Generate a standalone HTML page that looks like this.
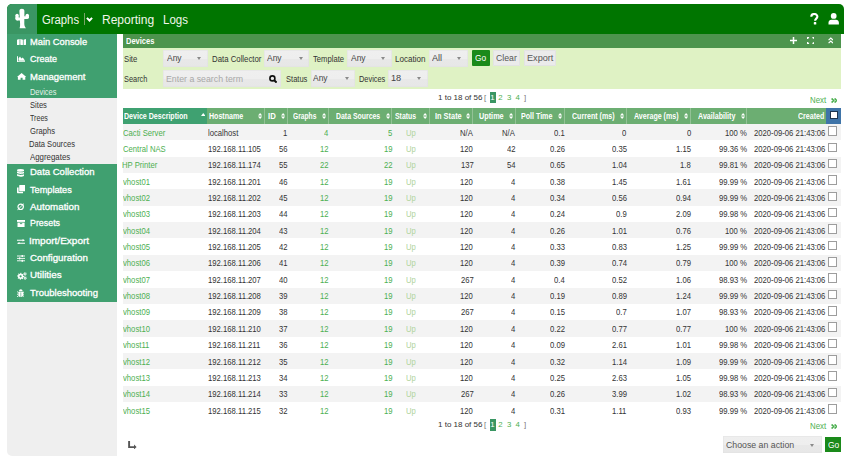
<!DOCTYPE html>
<html><head><meta charset="utf-8">
<style>
*{margin:0;padding:0;box-sizing:border-box}
html,body{width:848px;height:465px;overflow:hidden;background:#fff;font-family:"Liberation Sans",sans-serif;color:#333;position:relative}
.a{position:absolute}
.t{position:absolute;line-height:20px;white-space:nowrap;transform-origin:0 0}
.sel{background:linear-gradient(#efefef 0,#eeeeee 50%,#e8e8e8 56%,#e7e7e7 100%);border-radius:0.5px;box-shadow:inset 0 0 0 0.6px #e2e2e2}
.tri{width:0;height:0;border-left:2.2px solid transparent;border-right:2.2px solid transparent;border-top:3px solid #8a8a8a}
</style></head><body>
<!-- header -->
<div class="a" style="left:7px;top:4px;width:837px;height:30px;background:#007500;border-radius:5px 5px 0 0;overflow:hidden">
  <div class="a" style="left:0;top:0;width:30px;height:30px;background:#3a9663"></div>
  <svg class="a" style="left:0;top:0" width="30" height="30" viewBox="0 0 30 30"><g fill="#fff">
    <path d="M12.4 7C12.4 5.6 13.5 4.8 14.9 4.8 16.4 4.8 17.4 5.6 17.4 7L17.3 20C17.4 22 18.2 23.4 19 24.2L12.6 24.2C13 23 13.2 21.5 13.1 20Z"/>
    <rect x="8.4" y="9.7" width="3.3" height="6.8" rx="1.65"/>
    <path d="M8.6 13.5H13.3V16.6H11.3C9.8 16.6 8.6 15.6 8.6 14.2Z"/>
    <rect x="18.6" y="9.7" width="3.3" height="5.1" rx="1.65"/>
    <path d="M17 12.2H21.8V12.8C21.8 14.2 20.8 15 19.4 15H17Z"/>
  </g></svg>
  <div class="a" style="left:77.2px;top:9px;width:0.8px;height:11.6px;background:#78a466"></div>
  <svg class="a" style="left:79.4px;top:12.8px" width="7" height="4.8" viewBox="0 0 7 4.8"><path d="M0.9 0.9L3.5 3.5 6.1 0.9" stroke="#fff" stroke-width="2" fill="none"/></svg>
  <!-- ? -->
  <svg class="a" style="left:803.2px;top:9.4px" width="8.6" height="11.6" viewBox="0 0 8.6 11.6"><path d="M1.3 3.7C1.3 1.9 2.6 1 4.3 1 6 1 7.4 2 7.4 3.6 7.4 5.6 5.1 5.7 5.1 7.7" stroke="#fff" stroke-width="2.1" fill="none"/><rect x="3.8" y="9.1" width="2.5" height="2.5" rx="0.6" fill="#fff"/></svg>
  <!-- user -->
  <svg class="a" style="left:821.4px;top:9.4px" width="11.2" height="11.6" viewBox="0 0 11.2 11.6"><circle cx="5.7" cy="2.9" r="2.9" fill="#fff"/><path d="M0.5 11.6V9.8C0.5 7.9 1.8 6.8 3.5 6.8H8C9.6 6.8 10.9 7.9 10.9 9.8V11.6Z" fill="#fff"/></svg>
</div>
<!-- sidebar -->
<div class="a" style="left:7px;top:34px;width:109.6px;height:422px;background:#efefef;border-radius:0 0 0 5px"></div>
<div class="a" style="left:7px;top:34px;width:109.6px;height:63.5px;background:#40a070"></div>
<div class="a" style="left:7px;top:163.8px;width:109.6px;height:138.2px;background:#40a070"></div>
<!-- sidebar icons -->
<svg class="a" style="left:16.8px;top:38.8px" width="9.2" height="6.5" viewBox="0 0 9.2 6.5"><path d="M0 0.8L2.6 0 2.6 5.7 0 6.5ZM3.3 0L5.9 0.8 5.9 6.5 3.3 5.7ZM6.6 0.8L9.2 0 9.2 5.7 6.6 6.5Z" fill="#fff"/></svg>
<svg class="a" style="left:16.8px;top:56px" width="8.4" height="6.2" viewBox="0 0 8.4 6.2"><path d="M0 0.2H1V5.2H8.4V6.2H0ZM1.6 4.8V2.2L3 0.6 4.4 2.6 5.8 1.4 8.2 4.8Z" fill="#fff"/></svg>
<svg class="a" style="left:16.8px;top:73.2px" width="9.2" height="6.8" viewBox="0 0 9.2 6.8"><path d="M4.6 0L9.2 3.9 8.3 3.9 8.3 6.8 5.6 6.8 5.6 4.7 3.6 4.7 3.6 6.8 0.9 6.8 0.9 3.9 0 3.9Z" fill="#fff"/></svg>
<svg class="a" style="left:16.8px;top:168.9px" width="7.2" height="7.9" viewBox="0 0 7.2 7.9"><ellipse cx="3.6" cy="1.4" rx="3.6" ry="1.4" fill="#fff"/><path d="M0 2.5C0.8 3.6 6.4 3.6 7.2 2.5V4.1C6.4 5.2 0.8 5.2 0 4.1ZM0 5.1C0.8 6.2 6.4 6.2 7.2 5.1V6.6C6.4 8.2 0.8 8.2 0 6.6Z" fill="#fff"/></svg>
<svg class="a" style="left:16.7px;top:185.4px" width="8.5" height="8.3" viewBox="0 0 8.5 8.3"><rect x="2.2" y="0" width="6.3" height="6.3" rx="0.7" fill="#fff"/><path d="M0 2.4H1.6V6.8H6V8.3H0.7C0.3 8.3 0 8 0 7.6Z" fill="#fff"/></svg>
<svg class="a" style="left:16.7px;top:203.3px" width="7.4" height="7.5" viewBox="0 0 7.4 7.5"><circle cx="3.7" cy="3.8" r="2.7" stroke="#fff" stroke-width="1.2" fill="none"/><path d="M0.4 7.2L7 0.4" stroke="#fff" stroke-width="0.9"/></svg>
<svg class="a" style="left:16.7px;top:220.2px" width="8.1" height="7.1" viewBox="0 0 8.1 7.1"><rect x="0" y="0" width="8.1" height="1.9" fill="#fff"/><path d="M0.5 2.6H7.6V7.1H0.5Z" fill="#fff"/><rect x="2.9" y="3.2" width="2.3" height="0.9" fill="#40a070"/></svg>
<svg class="a" style="left:16.7px;top:238.8px" width="8.1" height="5.6" viewBox="0 0 8.1 5.6"><path d="M0 1.3H6.2M8.1 4.3H1.9" stroke="#fff" stroke-width="1.1" fill="none"/><path d="M5.6 0L8.1 1.3 5.6 2.6ZM2.5 3L0 4.3 2.5 5.6Z" fill="#fff"/></svg>
<svg class="a" style="left:16.7px;top:255.3px" width="8.1" height="6.8" viewBox="0 0 8.1 6.8"><path d="M0 1H8.1M0 3.4H8.1M0 5.8H8.1" stroke="#fff" stroke-width="0.9"/><rect x="4.6" y="0" width="1.3" height="2" fill="#fff"/><rect x="2" y="2.4" width="1.3" height="2" fill="#fff"/><rect x="4.6" y="4.8" width="1.3" height="2" fill="#fff"/></svg>
<svg class="a" style="left:16.9px;top:272.1px" width="9.9" height="8" viewBox="0 0 9.9 8"><path fill-rule="evenodd" d="M7.10 4.30 L7.03 4.98 L6.00 5.29 L5.76 5.74 L6.07 6.77 L5.54 7.21 L4.59 6.70 L4.11 6.85 L3.60 7.80 L2.92 7.73 L2.61 6.70 L2.16 6.46 L1.13 6.77 L0.69 6.24 L1.20 5.29 L1.05 4.81 L0.10 4.30 L0.17 3.62 L1.20 3.31 L1.44 2.86 L1.13 1.83 L1.66 1.39 L2.61 1.90 L3.09 1.75 L3.60 0.80 L4.28 0.87 L4.59 1.90 L5.04 2.14 L6.07 1.83 L6.51 2.36 L6.00 3.31 L6.15 3.79Z M4.70 4.30 A1.1 1.1 0 1 0 2.50 4.30 A1.1 1.1 0 1 0 4.70 4.30Z M9.85 1.90 L9.79 2.35 L9.18 2.52 L8.98 2.78 L8.97 3.42 L8.55 3.59 L8.10 3.15 L7.78 3.11 L7.22 3.42 L6.86 3.14 L7.02 2.52 L6.89 2.22 L6.35 1.90 L6.41 1.45 L7.02 1.28 L7.22 1.02 L7.22 0.38 L7.65 0.21 L8.10 0.65 L8.42 0.69 L8.97 0.38 L9.34 0.66 L9.18 1.27 L9.31 1.58Z M8.65 1.90 A0.55 0.55 0 1 0 7.55 1.90 A0.55 0.55 0 1 0 8.65 1.90Z M9.85 6.10 L9.79 6.55 L9.18 6.72 L8.98 6.98 L8.97 7.62 L8.55 7.79 L8.10 7.35 L7.78 7.31 L7.22 7.62 L6.86 7.34 L7.02 6.72 L6.89 6.42 L6.35 6.10 L6.41 5.65 L7.02 5.47 L7.22 5.22 L7.22 4.58 L7.65 4.41 L8.10 4.85 L8.42 4.89 L8.97 4.58 L9.34 4.86 L9.18 5.47 L9.31 5.78Z M8.65 6.10 A0.55 0.55 0 1 0 7.55 6.10 A0.55 0.55 0 1 0 8.65 6.10Z" fill="#fff"/></svg>
<svg class="a" style="left:16.9px;top:289px" width="7.6" height="8.3" viewBox="0 0 7.6 8.3"><path d="M2 2.2C2 0.9 2.8 0.2 3.8 0.2 4.8 0.2 5.6 0.9 5.6 2.2Z" fill="#fff"/><path d="M1.5 2.8H6.1V6C6.1 7.4 5.1 8.1 3.8 8.1 2.5 8.1 1.5 7.4 1.5 6Z" fill="#fff"/><path d="M0.1 2.6L1.6 3.6M7.5 2.6L6 3.6M0 5.2H1.6M7.6 5.2H6M0.1 7.8L1.7 6.7M7.5 7.8L5.9 6.7" stroke="#fff" stroke-width="0.9"/><path d="M3.8 3.4V8" stroke="#40a070" stroke-width="0.6"/></svg>
<!-- devices heading -->
<div class="a" style="left:123px;top:34px;width:718px;height:14.2px;background:#4d944d"></div>
<svg class="a" style="left:790px;top:36.9px" width="7" height="7" viewBox="0 0 7 7"><path d="M3.5 0V7M0 3.5H7" stroke="#fff" stroke-width="1.5"/></svg>
<svg class="a" style="left:806.7px;top:37.1px" width="7.5" height="7" viewBox="0 0 7.5 7"><path d="M0.6 2.1V0.6H2.1M5.4 0.6H6.9V2.1M6.9 4.9V6.4H5.4M2.1 6.4H0.6V4.9" stroke="#fff" stroke-width="1.2" fill="none"/></svg>
<svg class="a" style="left:827.6px;top:37.4px" width="5.6" height="7" viewBox="0 0 5.6 7"><path d="M0.6 3.2L2.8 1 5 3.2M0.6 6.2L2.8 4 5 6.2" stroke="#fff" stroke-width="1.2" fill="none"/></svg>
<!-- filter -->
<div class="a" style="left:123px;top:48.2px;width:718px;height:40.6px;background:#dff2c4"></div>
<!-- bottom -->
<svg class="a" style="left:127.8px;top:440.6px" width="9" height="8.4" viewBox="0 0 9 8.4"><path d="M1.1 0V6.1H6.4" stroke="#555" stroke-width="1.9" fill="none"/><path d="M6 3.6L8.6 6.1 6 8.4Z" fill="#555"/></svg>
<div class="a sel" style="left:723px;top:436.2px;width:98.9px;height:17.2px"></div>
<div class="a tri" style="left:810.3px;top:443.8px"></div>
<div class="a" style="left:824.9px;top:437px;width:16.3px;height:15.4px;background:#1a8a1a"></div>
<div class="t" style="left:42.24px;top:10px;font-size:12.3px;color:#f2f6ec;transform:scaleX(0.919)">Graphs</div>
<div class="t" style="left:101.51px;top:10px;font-size:12.3px;color:#f2f6ec;transform:scaleX(0.978)">Reporting</div>
<div class="t" style="left:163.25px;top:10px;font-size:12.3px;color:#f2f6ec;transform:scaleX(0.936)">Logs</div>
<div class="t" style="left:29.83px;top:32px;font-size:9.6px;color:#fff;-webkit-text-stroke:0.3px #fff;transform:scaleX(0.973)">Main Console</div>
<div class="t" style="left:30.15px;top:49px;font-size:9.6px;color:#fff;-webkit-text-stroke:0.3px #fff;transform:scaleX(0.935)">Create</div>
<div class="t" style="left:29.82px;top:67px;font-size:9.6px;color:#fff;-webkit-text-stroke:0.3px #fff;transform:scaleX(0.990)">Management</div>
<div class="t" style="left:29.59px;top:82px;font-size:8.6px;color:#e4f1e8;transform:scaleX(0.865)">Devices</div>
<div class="t" style="left:29.56px;top:95px;font-size:8.6px;color:#333;transform:scaleX(0.885)">Sites</div>
<div class="t" style="left:29.74px;top:108px;font-size:8.6px;color:#333;transform:scaleX(0.826)">Trees</div>
<div class="t" style="left:29.52px;top:121px;font-size:8.6px;color:#333;transform:scaleX(0.888)">Graphs</div>
<div class="t" style="left:29.27px;top:134px;font-size:8.6px;color:#333;transform:scaleX(0.882)">Data Sources</div>
<div class="t" style="left:29.88px;top:147px;font-size:8.6px;color:#333;transform:scaleX(0.914)">Aggregates</div>
<div class="t" style="left:29.62px;top:162px;font-size:9.6px;color:#fff;-webkit-text-stroke:0.3px #fff;transform:scaleX(0.991)">Data Collection</div>
<div class="t" style="left:30.19px;top:180px;font-size:9.6px;color:#fff;-webkit-text-stroke:0.3px #fff;transform:scaleX(0.956)">Templates</div>
<div class="t" style="left:30.38px;top:197px;font-size:9.6px;color:#fff;-webkit-text-stroke:0.3px #fff;transform:scaleX(1.018)">Automation</div>
<div class="t" style="left:29.67px;top:213px;font-size:9.6px;color:#fff;-webkit-text-stroke:0.3px #fff;transform:scaleX(0.923)">Presets</div>
<div class="t" style="left:29.47px;top:231px;font-size:9.6px;color:#fff;-webkit-text-stroke:0.3px #fff;transform:scaleX(1.043)">Import/Export</div>
<div class="t" style="left:29.91px;top:248px;font-size:9.6px;color:#fff;-webkit-text-stroke:0.3px #fff;transform:scaleX(1.014)">Configuration</div>
<div class="t" style="left:29.64px;top:265px;font-size:9.6px;color:#fff;-webkit-text-stroke:0.3px #fff;transform:scaleX(1.022)">Utilities</div>
<div class="t" style="left:30.19px;top:283px;font-size:9.6px;color:#fff;-webkit-text-stroke:0.3px #fff;transform:scaleX(0.993)">Troubleshooting</div>
<div class="t" style="left:124.15px;top:49px;font-size:8.6px;color:#333;transform:scaleX(0.896)">Site</div>
<div class="t" style="left:211.56px;top:49px;font-size:8.6px;color:#333;transform:scaleX(0.908)">Data Collector</div>
<div class="t" style="left:313.23px;top:49px;font-size:8.6px;color:#333;transform:scaleX(0.891)">Template</div>
<div class="t" style="left:395.14px;top:49px;font-size:8.6px;color:#333;transform:scaleX(0.937)">Location</div>
<div class="t" style="left:124.17px;top:69px;font-size:8.6px;color:#333;transform:scaleX(0.859)">Search</div>
<div class="t" style="left:285.56px;top:69px;font-size:8.6px;color:#333;transform:scaleX(0.878)">Status</div>
<div class="t" style="left:358.79px;top:69px;font-size:8.6px;color:#333;transform:scaleX(0.859)">Devices</div>
<div class="a sel" style="left:162.7px;top:49.8px;width:45.70px;height:16.80px"></div>
<div class="a tri" style="left:197.2px;top:56.7px"></div>
<div class="a sel" style="left:263.8px;top:49.8px;width:45.40px;height:16.80px"></div>
<div class="a tri" style="left:298.5px;top:56.7px"></div>
<div class="a sel" style="left:347.2px;top:49.8px;width:45.30px;height:16.80px"></div>
<div class="a tri" style="left:381.3px;top:56.7px"></div>
<div class="a sel" style="left:428.5px;top:49.8px;width:39.70px;height:16.80px"></div>
<div class="a tri" style="left:457.2px;top:56.7px"></div>
<div class="a sel" style="left:310.5px;top:69.8px;width:44.00px;height:17.40px"></div>
<div class="a tri" style="left:344.5px;top:77.0px"></div>
<div class="a sel" style="left:387.8px;top:69.8px;width:40.60px;height:17.40px"></div>
<div class="a tri" style="left:417.1px;top:77.0px"></div>
<div class="a sel" style="left:162.7px;top:69.8px;width:118.5px;height:17.4px;"></div>
<div class="t" style="left:166.58px;top:48px;font-size:8.6px;color:#444;transform:scaleX(0.982)">Any</div>
<div class="t" style="left:267.38px;top:48px;font-size:8.6px;color:#444;transform:scaleX(0.982)">Any</div>
<div class="t" style="left:351.08px;top:48px;font-size:8.6px;color:#444;transform:scaleX(0.982)">Any</div>
<div class="t" style="left:431.68px;top:48px;font-size:8.6px;color:#444;transform:scaleX(1.048)">All</div>
<div class="t" style="left:313.48px;top:68px;font-size:8.6px;color:#444;transform:scaleX(0.982)">Any</div>
<div class="t" style="left:391.41px;top:68px;font-size:8.6px;color:#444;transform:scaleX(1.066)">18</div>
<div class="t" style="left:166.48px;top:69px;font-size:8.6px;color:#a8a8a8;transform:scaleX(1.021)">Enter a search term</div>
<div class="t" style="left:726.36px;top:435px;font-size:8.6px;color:#555;transform:scaleX(1.019)">Choose an action</div>
<div class="t" style="left:827.58px;top:435px;font-size:8.6px;color:#fff;transform:scaleX(0.983)">Go</div>
<div class="t" style="left:125.99px;top:31px;font-size:8.3px;color:#fff;font-weight:bold;transform:scaleX(0.905)">Devices</div>
<div class="a" style="left:471.8px;top:50.1px;width:18.2px;height:16.2px;background:#1a8a1a;border-radius:1px"></div>
<div class="a" style="left:492.7px;top:50.1px;width:27.7px;height:16.2px;background:#ebebeb;border-radius:1px;box-shadow:inset 0 0 0 1px #e3e3e3"></div>
<div class="a" style="left:523.7px;top:50.1px;width:32.7px;height:16.2px;background:#ebebeb;border-radius:1px;box-shadow:inset 0 0 0 1px #e3e3e3"></div>
<div class="t" style="left:475.38px;top:48px;font-size:8.6px;color:#fff;transform:scaleX(0.973)">Go</div>
<div class="t" style="left:496.16px;top:48px;font-size:8.6px;color:#555;transform:scaleX(1.015)">Clear</div>
<div class="t" style="left:526.55px;top:48px;font-size:8.6px;color:#555;transform:scaleX(1.063)">Export</div>
<div class="t" style="left:437.80px;top:88px;font-size:7.8px;color:#333;transform:scaleX(1.025)">1 to 18 of 56</div>
<div class="t" style="left:483.95px;top:88px;font-size:7.8px;color:#777">[</div>
<div class="a" style="left:489.7px;top:92.2px;width:6.6px;height:11.1px;background:#3a9663"></div>
<div class="t" style="left:490.22px;top:88px;font-size:7.8px;color:#fff">1</div>
<div class="t" style="left:498.31px;top:88px;font-size:7.8px;color:#4caf50">2</div>
<div class="t" style="left:506.91px;top:88px;font-size:7.8px;color:#4caf50">3</div>
<div class="t" style="left:515.42px;top:88px;font-size:7.8px;color:#4caf50">4</div>
<div class="t" style="left:523.94px;top:88px;font-size:7.8px;color:#777">]</div>
<div class="t" style="left:437.80px;top:415px;font-size:7.8px;color:#333;transform:scaleX(1.025)">1 to 18 of 56</div>
<div class="t" style="left:483.95px;top:415px;font-size:7.8px;color:#777">[</div>
<div class="a" style="left:489.7px;top:418.9px;width:6.6px;height:11.7px;background:#3a9663"></div>
<div class="t" style="left:490.22px;top:415px;font-size:7.8px;color:#fff">1</div>
<div class="t" style="left:498.31px;top:415px;font-size:7.8px;color:#4caf50">2</div>
<div class="t" style="left:506.91px;top:415px;font-size:7.8px;color:#4caf50">3</div>
<div class="t" style="left:515.42px;top:415px;font-size:7.8px;color:#4caf50">4</div>
<div class="t" style="left:523.94px;top:415px;font-size:7.8px;color:#777">]</div>
<div class="t" style="left:810.25px;top:90px;font-size:8.4px;color:#4caf50;transform:scaleX(0.939)">Next</div>
<div class="t" style="left:810.25px;top:416px;font-size:8.4px;color:#4caf50;transform:scaleX(0.939)">Next</div>
<svg class="a" style="left:830.9px;top:97.5px" width="6.5" height="5" viewBox="0 0 6.5 5"><path d="M0.6 0.5L2.6 2.5 0.6 4.5M3.6 0.5L5.6 2.5 3.6 4.5" stroke="#4caf50" stroke-width="1.7" fill="none"/></svg>
<svg class="a" style="left:830.9px;top:424.4px" width="6.5" height="5" viewBox="0 0 6.5 5"><path d="M0.6 0.5L2.6 2.5 0.6 4.5M3.6 0.5L5.6 2.5 3.6 4.5" stroke="#4caf50" stroke-width="1.7" fill="none"/></svg>
<div class="a" style="left:123px;top:107.5px;width:718px;height:16.5px;background:#6cae72"></div>
<div class="a" style="left:123px;top:107.5px;width:84.4px;height:16.5px;background:#3fa171"></div>
<div class="a" style="left:825.7px;top:107.5px;width:15.3px;height:16.5px;background:#3f74a8"></div>
<div class="a" style="left:263.5px;top:107.5px;width:1px;height:16.5px;background:#93c296"></div>
<div class="a" style="left:286.8px;top:107.5px;width:1px;height:16.5px;background:#93c296"></div>
<div class="a" style="left:327.9px;top:107.5px;width:1px;height:16.5px;background:#93c296"></div>
<div class="a" style="left:391.1px;top:107.5px;width:1px;height:16.5px;background:#93c296"></div>
<div class="a" style="left:428.8px;top:107.5px;width:1px;height:16.5px;background:#93c296"></div>
<div class="a" style="left:471.9px;top:107.5px;width:1px;height:16.5px;background:#93c296"></div>
<div class="a" style="left:515.1px;top:107.5px;width:1px;height:16.5px;background:#93c296"></div>
<div class="a" style="left:563.7px;top:107.5px;width:1px;height:16.5px;background:#93c296"></div>
<div class="a" style="left:626.1px;top:107.5px;width:1px;height:16.5px;background:#93c296"></div>
<div class="a" style="left:689.6px;top:107.5px;width:1px;height:16.5px;background:#93c296"></div>
<div class="a" style="left:745.7px;top:107.5px;width:1px;height:16.5px;background:#93c296"></div>
<div class="a" style="left:829.7px;top:110.7px;width:8.5px;height:8.4px;background:#fff;border:0.8px solid #1d3550"></div>
<div class="t" style="left:124.42px;top:107px;font-size:8.2px;color:#fff;font-weight:bold;transform:scaleX(0.863)">Device Description</div>
<div class="t" style="left:209.12px;top:107px;font-size:8.2px;color:#fff;font-weight:bold;transform:scaleX(0.863)">Hostname</div>
<div class="t" style="left:267.58px;top:107px;font-size:8.2px;color:#fff;font-weight:bold;transform:scaleX(0.945)">ID</div>
<div class="t" style="left:292.93px;top:107px;font-size:8.2px;color:#fff;font-weight:bold;transform:scaleX(0.817)">Graphs</div>
<div class="t" style="left:335.73px;top:107px;font-size:8.2px;color:#fff;font-weight:bold;transform:scaleX(0.844)">Data Sources</div>
<div class="t" style="left:395.09px;top:107px;font-size:8.2px;color:#fff;font-weight:bold;transform:scaleX(0.842)">Status</div>
<div class="t" style="left:434.60px;top:107px;font-size:8.2px;color:#fff;font-weight:bold;transform:scaleX(0.903)">In State</div>
<div class="t" style="left:478.56px;top:107px;font-size:8.2px;color:#fff;font-weight:bold;transform:scaleX(0.888)">Uptime</div>
<div class="t" style="left:521.32px;top:107px;font-size:8.2px;color:#fff;font-weight:bold;transform:scaleX(0.865)">Poll Time</div>
<div class="t" style="left:572.12px;top:107px;font-size:8.2px;color:#fff;font-weight:bold;transform:scaleX(0.865)">Current (ms)</div>
<div class="t" style="left:634.22px;top:107px;font-size:8.2px;color:#fff;font-weight:bold;transform:scaleX(0.864)">Average (ms)</div>
<div class="t" style="left:697.52px;top:107px;font-size:8.2px;color:#fff;font-weight:bold;transform:scaleX(0.870)">Availability</div>
<div class="t" style="left:797.62px;top:107px;font-size:8.2px;color:#fff;font-weight:bold;transform:scaleX(0.860)">Created</div>
<svg class="a" style="left:200.9px;top:113px" width="4.5" height="3" viewBox="0 0 4.5 3"><path d="M0 3L2.25 0 4.5 3z" fill="#fff"/></svg>
<svg class="a" style="left:257.7px;top:113px" width="4.2" height="6" viewBox="0 0 4.2 6"><path d="M0 2.6L2.1 0 4.2 2.6zM0 3.4L2.1 6 4.2 3.4z" fill="#fff"/></svg>
<svg class="a" style="left:280.7px;top:113px" width="4.2" height="6" viewBox="0 0 4.2 6"><path d="M0 2.6L2.1 0 4.2 2.6zM0 3.4L2.1 6 4.2 3.4z" fill="#fff"/></svg>
<svg class="a" style="left:322px;top:113px" width="4.2" height="6" viewBox="0 0 4.2 6"><path d="M0 2.6L2.1 0 4.2 2.6zM0 3.4L2.1 6 4.2 3.4z" fill="#fff"/></svg>
<svg class="a" style="left:385.5px;top:113px" width="4.2" height="6" viewBox="0 0 4.2 6"><path d="M0 2.6L2.1 0 4.2 2.6zM0 3.4L2.1 6 4.2 3.4z" fill="#fff"/></svg>
<svg class="a" style="left:422.7px;top:113px" width="4.2" height="6" viewBox="0 0 4.2 6"><path d="M0 2.6L2.1 0 4.2 2.6zM0 3.4L2.1 6 4.2 3.4z" fill="#fff"/></svg>
<svg class="a" style="left:466.3px;top:113px" width="4.2" height="6" viewBox="0 0 4.2 6"><path d="M0 2.6L2.1 0 4.2 2.6zM0 3.4L2.1 6 4.2 3.4z" fill="#fff"/></svg>
<svg class="a" style="left:509px;top:113px" width="4.2" height="6" viewBox="0 0 4.2 6"><path d="M0 2.6L2.1 0 4.2 2.6zM0 3.4L2.1 6 4.2 3.4z" fill="#fff"/></svg>
<svg class="a" style="left:558.1px;top:113px" width="4.2" height="6" viewBox="0 0 4.2 6"><path d="M0 2.6L2.1 0 4.2 2.6zM0 3.4L2.1 6 4.2 3.4z" fill="#fff"/></svg>
<svg class="a" style="left:620.1px;top:113px" width="4.2" height="6" viewBox="0 0 4.2 6"><path d="M0 2.6L2.1 0 4.2 2.6zM0 3.4L2.1 6 4.2 3.4z" fill="#fff"/></svg>
<svg class="a" style="left:684px;top:113px" width="4.2" height="6" viewBox="0 0 4.2 6"><path d="M0 2.6L2.1 0 4.2 2.6zM0 3.4L2.1 6 4.2 3.4z" fill="#fff"/></svg>
<svg class="a" style="left:740.5px;top:113px" width="4.2" height="6" viewBox="0 0 4.2 6"><path d="M0 2.6L2.1 0 4.2 2.6zM0 3.4L2.1 6 4.2 3.4z" fill="#fff"/></svg>
<div class="a" style="left:123px;top:124.00px;width:718px;height:16.35px;background:#f3f3f3"></div>
<div class="t" style="left:122.61px;top:124px;font-size:8.2px;color:#4caf50;transform:scaleX(0.939)">Cacti Server</div>
<div class="t" style="left:207.78px;top:124px;font-size:8.2px;color:#333;transform:scaleX(0.939)">localhost</div>
<div class="t" style="left:283.09px;top:124px;font-size:8.2px;color:#333;transform:scaleX(0.939)">1</div>
<div class="t" style="left:324.24px;top:124px;font-size:8.2px;color:#4caf50;transform:scaleX(0.939)">4</div>
<div class="t" style="left:387.83px;top:124px;font-size:8.2px;color:#4caf50;transform:scaleX(0.939)">5</div>
<div class="t" style="left:405.64px;top:124px;font-size:8.2px;color:#b0d39e;transform:scaleX(0.939)">Up</div>
<div class="t" style="left:460.18px;top:124px;font-size:8.2px;color:#333;transform:scaleX(0.939)">N/A</div>
<div class="t" style="left:502.48px;top:124px;font-size:8.2px;color:#333;transform:scaleX(0.939)">N/A</div>
<div class="t" style="left:554.46px;top:124px;font-size:8.2px;color:#333;transform:scaleX(0.939)">0.1</div>
<div class="t" style="left:622.42px;top:124px;font-size:8.2px;color:#333;transform:scaleX(0.939)">0</div>
<div class="t" style="left:686.52px;top:124px;font-size:8.2px;color:#333;transform:scaleX(0.939)">0</div>
<div class="t" style="left:725.02px;top:124px;font-size:8.2px;color:#333;transform:scaleX(0.939)">100 %</div>
<div class="t" style="left:754.13px;top:124px;font-size:8.2px;color:#333;transform:scaleX(0.939)">2020-09-06 21:43:06</div>
<div class="a" style="left:828.2px;top:126.20px;width:8.7px;height:9.5px;background:#fff;border:1px solid #9d9d9d"></div>
<div class="t" style="left:122.61px;top:140px;font-size:8.2px;color:#4caf50;transform:scaleX(0.939)">Central NAS</div>
<div class="t" style="left:207.72px;top:140px;font-size:8.2px;color:#333;transform:scaleX(0.939)">192.168.11.105</div>
<div class="t" style="left:278.78px;top:140px;font-size:8.2px;color:#333;transform:scaleX(0.939)">56</div>
<div class="t" style="left:320.14px;top:140px;font-size:8.2px;color:#4caf50;transform:scaleX(0.939)">12</div>
<div class="t" style="left:383.60px;top:140px;font-size:8.2px;color:#4caf50;transform:scaleX(0.939)">19</div>
<div class="t" style="left:405.64px;top:140px;font-size:8.2px;color:#b0d39e;transform:scaleX(0.939)">Up</div>
<div class="t" style="left:460.45px;top:140px;font-size:8.2px;color:#333;transform:scaleX(0.939)">120</div>
<div class="t" style="left:507.14px;top:140px;font-size:8.2px;color:#333;transform:scaleX(0.939)">42</div>
<div class="t" style="left:550.15px;top:140px;font-size:8.2px;color:#333;transform:scaleX(0.939)">0.26</div>
<div class="t" style="left:611.73px;top:140px;font-size:8.2px;color:#333;transform:scaleX(0.939)">0.35</div>
<div class="t" style="left:675.83px;top:140px;font-size:8.2px;color:#333;transform:scaleX(0.939)">1.15</div>
<div class="t" style="left:718.61px;top:140px;font-size:8.2px;color:#333;transform:scaleX(0.939)">99.36 %</div>
<div class="t" style="left:754.13px;top:140px;font-size:8.2px;color:#333;transform:scaleX(0.939)">2020-09-06 21:43:06</div>
<div class="a" style="left:828.2px;top:142.55px;width:8.7px;height:9.5px;background:#fff;border:1px solid #9d9d9d"></div>
<div class="a" style="left:123px;top:156.70px;width:718px;height:16.35px;background:#f3f3f3"></div>
<div class="t" style="left:122.36px;top:156px;font-size:8.2px;color:#4caf50;transform:scaleX(0.939)">HP Printer</div>
<div class="t" style="left:207.72px;top:156px;font-size:8.2px;color:#333;transform:scaleX(0.939)">192.168.11.174</div>
<div class="t" style="left:278.76px;top:156px;font-size:8.2px;color:#333;transform:scaleX(0.939)">55</div>
<div class="t" style="left:320.14px;top:156px;font-size:8.2px;color:#4caf50;transform:scaleX(0.939)">22</div>
<div class="t" style="left:383.64px;top:156px;font-size:8.2px;color:#4caf50;transform:scaleX(0.939)">22</div>
<div class="t" style="left:405.64px;top:156px;font-size:8.2px;color:#b0d39e;transform:scaleX(0.939)">Up</div>
<div class="t" style="left:460.55px;top:156px;font-size:8.2px;color:#333;transform:scaleX(0.939)">137</div>
<div class="t" style="left:506.96px;top:156px;font-size:8.2px;color:#333;transform:scaleX(0.939)">54</div>
<div class="t" style="left:550.13px;top:156px;font-size:8.2px;color:#333;transform:scaleX(0.939)">0.65</div>
<div class="t" style="left:611.64px;top:156px;font-size:8.2px;color:#333;transform:scaleX(0.939)">1.04</div>
<div class="t" style="left:680.12px;top:156px;font-size:8.2px;color:#333;transform:scaleX(0.939)">1.8</div>
<div class="t" style="left:718.61px;top:156px;font-size:8.2px;color:#333;transform:scaleX(0.939)">99.81 %</div>
<div class="t" style="left:754.13px;top:156px;font-size:8.2px;color:#333;transform:scaleX(0.939)">2020-09-06 21:43:06</div>
<div class="a" style="left:828.2px;top:158.90px;width:8.7px;height:9.5px;background:#fff;border:1px solid #9d9d9d"></div>
<div class="t" style="left:122.98px;top:173px;font-size:8.2px;color:#4caf50;transform:scaleX(0.939)">vhost01</div>
<div class="t" style="left:207.72px;top:173px;font-size:8.2px;color:#333;transform:scaleX(0.939)">192.168.11.201</div>
<div class="t" style="left:278.78px;top:173px;font-size:8.2px;color:#333;transform:scaleX(0.939)">46</div>
<div class="t" style="left:320.14px;top:173px;font-size:8.2px;color:#4caf50;transform:scaleX(0.939)">12</div>
<div class="t" style="left:383.60px;top:173px;font-size:8.2px;color:#4caf50;transform:scaleX(0.939)">19</div>
<div class="t" style="left:405.64px;top:173px;font-size:8.2px;color:#b0d39e;transform:scaleX(0.939)">Up</div>
<div class="t" style="left:460.45px;top:173px;font-size:8.2px;color:#333;transform:scaleX(0.939)">120</div>
<div class="t" style="left:511.24px;top:173px;font-size:8.2px;color:#333;transform:scaleX(0.939)">4</div>
<div class="t" style="left:550.15px;top:173px;font-size:8.2px;color:#333;transform:scaleX(0.939)">0.38</div>
<div class="t" style="left:611.73px;top:173px;font-size:8.2px;color:#333;transform:scaleX(0.939)">1.45</div>
<div class="t" style="left:675.89px;top:173px;font-size:8.2px;color:#333;transform:scaleX(0.939)">1.61</div>
<div class="t" style="left:718.61px;top:173px;font-size:8.2px;color:#333;transform:scaleX(0.939)">99.99 %</div>
<div class="t" style="left:754.13px;top:173px;font-size:8.2px;color:#333;transform:scaleX(0.939)">2020-09-06 21:43:06</div>
<div class="a" style="left:828.2px;top:175.25px;width:8.7px;height:9.5px;background:#fff;border:1px solid #9d9d9d"></div>
<div class="a" style="left:123px;top:189.40px;width:718px;height:16.35px;background:#f3f3f3"></div>
<div class="t" style="left:122.98px;top:189px;font-size:8.2px;color:#4caf50;transform:scaleX(0.939)">vhost02</div>
<div class="t" style="left:207.72px;top:189px;font-size:8.2px;color:#333;transform:scaleX(0.939)">192.168.11.202</div>
<div class="t" style="left:278.76px;top:189px;font-size:8.2px;color:#333;transform:scaleX(0.939)">45</div>
<div class="t" style="left:320.14px;top:189px;font-size:8.2px;color:#4caf50;transform:scaleX(0.939)">12</div>
<div class="t" style="left:383.60px;top:189px;font-size:8.2px;color:#4caf50;transform:scaleX(0.939)">19</div>
<div class="t" style="left:405.64px;top:189px;font-size:8.2px;color:#b0d39e;transform:scaleX(0.939)">Up</div>
<div class="t" style="left:460.45px;top:189px;font-size:8.2px;color:#333;transform:scaleX(0.939)">120</div>
<div class="t" style="left:511.24px;top:189px;font-size:8.2px;color:#333;transform:scaleX(0.939)">4</div>
<div class="t" style="left:550.04px;top:189px;font-size:8.2px;color:#333;transform:scaleX(0.939)">0.34</div>
<div class="t" style="left:611.75px;top:189px;font-size:8.2px;color:#333;transform:scaleX(0.939)">0.56</div>
<div class="t" style="left:675.74px;top:189px;font-size:8.2px;color:#333;transform:scaleX(0.939)">0.94</div>
<div class="t" style="left:718.61px;top:189px;font-size:8.2px;color:#333;transform:scaleX(0.939)">99.99 %</div>
<div class="t" style="left:754.13px;top:189px;font-size:8.2px;color:#333;transform:scaleX(0.939)">2020-09-06 21:43:06</div>
<div class="a" style="left:828.2px;top:191.60px;width:8.7px;height:9.5px;background:#fff;border:1px solid #9d9d9d"></div>
<div class="t" style="left:122.98px;top:205px;font-size:8.2px;color:#4caf50;transform:scaleX(0.939)">vhost03</div>
<div class="t" style="left:207.72px;top:205px;font-size:8.2px;color:#333;transform:scaleX(0.939)">192.168.11.203</div>
<div class="t" style="left:278.66px;top:205px;font-size:8.2px;color:#333;transform:scaleX(0.939)">44</div>
<div class="t" style="left:320.14px;top:205px;font-size:8.2px;color:#4caf50;transform:scaleX(0.939)">12</div>
<div class="t" style="left:383.60px;top:205px;font-size:8.2px;color:#4caf50;transform:scaleX(0.939)">19</div>
<div class="t" style="left:405.64px;top:205px;font-size:8.2px;color:#b0d39e;transform:scaleX(0.939)">Up</div>
<div class="t" style="left:460.45px;top:205px;font-size:8.2px;color:#333;transform:scaleX(0.939)">120</div>
<div class="t" style="left:511.24px;top:205px;font-size:8.2px;color:#333;transform:scaleX(0.939)">4</div>
<div class="t" style="left:550.04px;top:205px;font-size:8.2px;color:#333;transform:scaleX(0.939)">0.24</div>
<div class="t" style="left:616.04px;top:205px;font-size:8.2px;color:#333;transform:scaleX(0.939)">0.9</div>
<div class="t" style="left:675.87px;top:205px;font-size:8.2px;color:#333;transform:scaleX(0.939)">2.09</div>
<div class="t" style="left:718.61px;top:205px;font-size:8.2px;color:#333;transform:scaleX(0.939)">99.98 %</div>
<div class="t" style="left:754.13px;top:205px;font-size:8.2px;color:#333;transform:scaleX(0.939)">2020-09-06 21:43:06</div>
<div class="a" style="left:828.2px;top:207.95px;width:8.7px;height:9.5px;background:#fff;border:1px solid #9d9d9d"></div>
<div class="a" style="left:123px;top:222.10px;width:718px;height:16.35px;background:#f3f3f3"></div>
<div class="t" style="left:122.98px;top:222px;font-size:8.2px;color:#4caf50;transform:scaleX(0.939)">vhost04</div>
<div class="t" style="left:207.72px;top:222px;font-size:8.2px;color:#333;transform:scaleX(0.939)">192.168.11.204</div>
<div class="t" style="left:278.78px;top:222px;font-size:8.2px;color:#333;transform:scaleX(0.939)">43</div>
<div class="t" style="left:320.14px;top:222px;font-size:8.2px;color:#4caf50;transform:scaleX(0.939)">12</div>
<div class="t" style="left:383.60px;top:222px;font-size:8.2px;color:#4caf50;transform:scaleX(0.939)">19</div>
<div class="t" style="left:405.64px;top:222px;font-size:8.2px;color:#b0d39e;transform:scaleX(0.939)">Up</div>
<div class="t" style="left:460.45px;top:222px;font-size:8.2px;color:#333;transform:scaleX(0.939)">120</div>
<div class="t" style="left:511.24px;top:222px;font-size:8.2px;color:#333;transform:scaleX(0.939)">4</div>
<div class="t" style="left:550.15px;top:222px;font-size:8.2px;color:#333;transform:scaleX(0.939)">0.26</div>
<div class="t" style="left:611.79px;top:222px;font-size:8.2px;color:#333;transform:scaleX(0.939)">1.01</div>
<div class="t" style="left:675.85px;top:222px;font-size:8.2px;color:#333;transform:scaleX(0.939)">0.76</div>
<div class="t" style="left:725.02px;top:222px;font-size:8.2px;color:#333;transform:scaleX(0.939)">100 %</div>
<div class="t" style="left:754.13px;top:222px;font-size:8.2px;color:#333;transform:scaleX(0.939)">2020-09-06 21:43:06</div>
<div class="a" style="left:828.2px;top:224.30px;width:8.7px;height:9.5px;background:#fff;border:1px solid #9d9d9d"></div>
<div class="t" style="left:122.98px;top:238px;font-size:8.2px;color:#4caf50;transform:scaleX(0.939)">vhost05</div>
<div class="t" style="left:207.72px;top:238px;font-size:8.2px;color:#333;transform:scaleX(0.939)">192.168.11.205</div>
<div class="t" style="left:278.84px;top:238px;font-size:8.2px;color:#333;transform:scaleX(0.939)">42</div>
<div class="t" style="left:320.14px;top:238px;font-size:8.2px;color:#4caf50;transform:scaleX(0.939)">12</div>
<div class="t" style="left:383.60px;top:238px;font-size:8.2px;color:#4caf50;transform:scaleX(0.939)">19</div>
<div class="t" style="left:405.64px;top:238px;font-size:8.2px;color:#b0d39e;transform:scaleX(0.939)">Up</div>
<div class="t" style="left:460.45px;top:238px;font-size:8.2px;color:#333;transform:scaleX(0.939)">120</div>
<div class="t" style="left:511.24px;top:238px;font-size:8.2px;color:#333;transform:scaleX(0.939)">4</div>
<div class="t" style="left:550.15px;top:238px;font-size:8.2px;color:#333;transform:scaleX(0.939)">0.33</div>
<div class="t" style="left:611.75px;top:238px;font-size:8.2px;color:#333;transform:scaleX(0.939)">0.83</div>
<div class="t" style="left:675.83px;top:238px;font-size:8.2px;color:#333;transform:scaleX(0.939)">1.25</div>
<div class="t" style="left:718.61px;top:238px;font-size:8.2px;color:#333;transform:scaleX(0.939)">99.99 %</div>
<div class="t" style="left:754.13px;top:238px;font-size:8.2px;color:#333;transform:scaleX(0.939)">2020-09-06 21:43:06</div>
<div class="a" style="left:828.2px;top:240.65px;width:8.7px;height:9.5px;background:#fff;border:1px solid #9d9d9d"></div>
<div class="a" style="left:123px;top:254.80px;width:718px;height:16.35px;background:#f3f3f3"></div>
<div class="t" style="left:122.98px;top:254px;font-size:8.2px;color:#4caf50;transform:scaleX(0.939)">vhost06</div>
<div class="t" style="left:207.72px;top:254px;font-size:8.2px;color:#333;transform:scaleX(0.939)">192.168.11.206</div>
<div class="t" style="left:278.82px;top:254px;font-size:8.2px;color:#333;transform:scaleX(0.939)">41</div>
<div class="t" style="left:320.14px;top:254px;font-size:8.2px;color:#4caf50;transform:scaleX(0.939)">12</div>
<div class="t" style="left:383.60px;top:254px;font-size:8.2px;color:#4caf50;transform:scaleX(0.939)">19</div>
<div class="t" style="left:405.64px;top:254px;font-size:8.2px;color:#b0d39e;transform:scaleX(0.939)">Up</div>
<div class="t" style="left:460.45px;top:254px;font-size:8.2px;color:#333;transform:scaleX(0.939)">120</div>
<div class="t" style="left:511.24px;top:254px;font-size:8.2px;color:#333;transform:scaleX(0.939)">4</div>
<div class="t" style="left:550.17px;top:254px;font-size:8.2px;color:#333;transform:scaleX(0.939)">0.39</div>
<div class="t" style="left:611.64px;top:254px;font-size:8.2px;color:#333;transform:scaleX(0.939)">0.74</div>
<div class="t" style="left:675.87px;top:254px;font-size:8.2px;color:#333;transform:scaleX(0.939)">0.79</div>
<div class="t" style="left:725.02px;top:254px;font-size:8.2px;color:#333;transform:scaleX(0.939)">100 %</div>
<div class="t" style="left:754.13px;top:254px;font-size:8.2px;color:#333;transform:scaleX(0.939)">2020-09-06 21:43:06</div>
<div class="a" style="left:828.2px;top:257.00px;width:8.7px;height:9.5px;background:#fff;border:1px solid #9d9d9d"></div>
<div class="t" style="left:122.98px;top:271px;font-size:8.2px;color:#4caf50;transform:scaleX(0.939)">vhost07</div>
<div class="t" style="left:207.72px;top:271px;font-size:8.2px;color:#333;transform:scaleX(0.939)">192.168.11.207</div>
<div class="t" style="left:278.74px;top:271px;font-size:8.2px;color:#333;transform:scaleX(0.939)">40</div>
<div class="t" style="left:320.14px;top:271px;font-size:8.2px;color:#4caf50;transform:scaleX(0.939)">12</div>
<div class="t" style="left:383.60px;top:271px;font-size:8.2px;color:#4caf50;transform:scaleX(0.939)">19</div>
<div class="t" style="left:405.64px;top:271px;font-size:8.2px;color:#b0d39e;transform:scaleX(0.939)">Up</div>
<div class="t" style="left:460.55px;top:271px;font-size:8.2px;color:#333;transform:scaleX(0.939)">267</div>
<div class="t" style="left:511.24px;top:271px;font-size:8.2px;color:#333;transform:scaleX(0.939)">4</div>
<div class="t" style="left:554.31px;top:271px;font-size:8.2px;color:#333;transform:scaleX(0.939)">0.4</div>
<div class="t" style="left:611.81px;top:271px;font-size:8.2px;color:#333;transform:scaleX(0.939)">0.52</div>
<div class="t" style="left:675.85px;top:271px;font-size:8.2px;color:#333;transform:scaleX(0.939)">1.06</div>
<div class="t" style="left:718.61px;top:271px;font-size:8.2px;color:#333;transform:scaleX(0.939)">98.93 %</div>
<div class="t" style="left:754.13px;top:271px;font-size:8.2px;color:#333;transform:scaleX(0.939)">2020-09-06 21:43:06</div>
<div class="a" style="left:828.2px;top:273.35px;width:8.7px;height:9.5px;background:#fff;border:1px solid #9d9d9d"></div>
<div class="a" style="left:123px;top:287.50px;width:718px;height:16.35px;background:#f3f3f3"></div>
<div class="t" style="left:122.98px;top:287px;font-size:8.2px;color:#4caf50;transform:scaleX(0.939)">vhost08</div>
<div class="t" style="left:207.72px;top:287px;font-size:8.2px;color:#333;transform:scaleX(0.939)">192.168.11.208</div>
<div class="t" style="left:278.80px;top:287px;font-size:8.2px;color:#333;transform:scaleX(0.939)">39</div>
<div class="t" style="left:320.14px;top:287px;font-size:8.2px;color:#4caf50;transform:scaleX(0.939)">12</div>
<div class="t" style="left:383.60px;top:287px;font-size:8.2px;color:#4caf50;transform:scaleX(0.939)">19</div>
<div class="t" style="left:405.64px;top:287px;font-size:8.2px;color:#b0d39e;transform:scaleX(0.939)">Up</div>
<div class="t" style="left:460.45px;top:287px;font-size:8.2px;color:#333;transform:scaleX(0.939)">120</div>
<div class="t" style="left:511.24px;top:287px;font-size:8.2px;color:#333;transform:scaleX(0.939)">4</div>
<div class="t" style="left:550.17px;top:287px;font-size:8.2px;color:#333;transform:scaleX(0.939)">0.19</div>
<div class="t" style="left:611.77px;top:287px;font-size:8.2px;color:#333;transform:scaleX(0.939)">0.89</div>
<div class="t" style="left:675.74px;top:287px;font-size:8.2px;color:#333;transform:scaleX(0.939)">1.24</div>
<div class="t" style="left:718.61px;top:287px;font-size:8.2px;color:#333;transform:scaleX(0.939)">99.99 %</div>
<div class="t" style="left:754.13px;top:287px;font-size:8.2px;color:#333;transform:scaleX(0.939)">2020-09-06 21:43:06</div>
<div class="a" style="left:828.2px;top:289.70px;width:8.7px;height:9.5px;background:#fff;border:1px solid #9d9d9d"></div>
<div class="t" style="left:122.98px;top:303px;font-size:8.2px;color:#4caf50;transform:scaleX(0.939)">vhost09</div>
<div class="t" style="left:207.72px;top:303px;font-size:8.2px;color:#333;transform:scaleX(0.939)">192.168.11.209</div>
<div class="t" style="left:278.78px;top:303px;font-size:8.2px;color:#333;transform:scaleX(0.939)">38</div>
<div class="t" style="left:320.14px;top:303px;font-size:8.2px;color:#4caf50;transform:scaleX(0.939)">12</div>
<div class="t" style="left:383.60px;top:303px;font-size:8.2px;color:#4caf50;transform:scaleX(0.939)">19</div>
<div class="t" style="left:405.64px;top:303px;font-size:8.2px;color:#b0d39e;transform:scaleX(0.939)">Up</div>
<div class="t" style="left:460.55px;top:303px;font-size:8.2px;color:#333;transform:scaleX(0.939)">267</div>
<div class="t" style="left:511.24px;top:303px;font-size:8.2px;color:#333;transform:scaleX(0.939)">4</div>
<div class="t" style="left:550.13px;top:303px;font-size:8.2px;color:#333;transform:scaleX(0.939)">0.15</div>
<div class="t" style="left:616.08px;top:303px;font-size:8.2px;color:#333;transform:scaleX(0.939)">0.7</div>
<div class="t" style="left:675.91px;top:303px;font-size:8.2px;color:#333;transform:scaleX(0.939)">1.07</div>
<div class="t" style="left:718.61px;top:303px;font-size:8.2px;color:#333;transform:scaleX(0.939)">98.93 %</div>
<div class="t" style="left:754.13px;top:303px;font-size:8.2px;color:#333;transform:scaleX(0.939)">2020-09-06 21:43:06</div>
<div class="a" style="left:828.2px;top:306.05px;width:8.7px;height:9.5px;background:#fff;border:1px solid #9d9d9d"></div>
<div class="a" style="left:123px;top:320.20px;width:718px;height:16.35px;background:#f3f3f3"></div>
<div class="t" style="left:122.98px;top:320px;font-size:8.2px;color:#4caf50;transform:scaleX(0.939)">vhost10</div>
<div class="t" style="left:207.72px;top:320px;font-size:8.2px;color:#333;transform:scaleX(0.939)">192.168.11.210</div>
<div class="t" style="left:278.84px;top:320px;font-size:8.2px;color:#333;transform:scaleX(0.939)">37</div>
<div class="t" style="left:320.14px;top:320px;font-size:8.2px;color:#4caf50;transform:scaleX(0.939)">12</div>
<div class="t" style="left:383.60px;top:320px;font-size:8.2px;color:#4caf50;transform:scaleX(0.939)">19</div>
<div class="t" style="left:405.64px;top:320px;font-size:8.2px;color:#b0d39e;transform:scaleX(0.939)">Up</div>
<div class="t" style="left:460.45px;top:320px;font-size:8.2px;color:#333;transform:scaleX(0.939)">120</div>
<div class="t" style="left:511.24px;top:320px;font-size:8.2px;color:#333;transform:scaleX(0.939)">4</div>
<div class="t" style="left:550.21px;top:320px;font-size:8.2px;color:#333;transform:scaleX(0.939)">0.22</div>
<div class="t" style="left:611.81px;top:320px;font-size:8.2px;color:#333;transform:scaleX(0.939)">0.77</div>
<div class="t" style="left:675.91px;top:320px;font-size:8.2px;color:#333;transform:scaleX(0.939)">0.77</div>
<div class="t" style="left:725.02px;top:320px;font-size:8.2px;color:#333;transform:scaleX(0.939)">100 %</div>
<div class="t" style="left:754.13px;top:320px;font-size:8.2px;color:#333;transform:scaleX(0.939)">2020-09-06 21:43:06</div>
<div class="a" style="left:828.2px;top:322.40px;width:8.7px;height:9.5px;background:#fff;border:1px solid #9d9d9d"></div>
<div class="t" style="left:122.98px;top:336px;font-size:8.2px;color:#4caf50;transform:scaleX(0.939)">vhost11</div>
<div class="t" style="left:207.72px;top:336px;font-size:8.2px;color:#333;transform:scaleX(0.939)">192.168.11.211</div>
<div class="t" style="left:278.78px;top:336px;font-size:8.2px;color:#333;transform:scaleX(0.939)">36</div>
<div class="t" style="left:320.14px;top:336px;font-size:8.2px;color:#4caf50;transform:scaleX(0.939)">12</div>
<div class="t" style="left:383.60px;top:336px;font-size:8.2px;color:#4caf50;transform:scaleX(0.939)">19</div>
<div class="t" style="left:405.64px;top:336px;font-size:8.2px;color:#b0d39e;transform:scaleX(0.939)">Up</div>
<div class="t" style="left:460.45px;top:336px;font-size:8.2px;color:#333;transform:scaleX(0.939)">120</div>
<div class="t" style="left:511.24px;top:336px;font-size:8.2px;color:#333;transform:scaleX(0.939)">4</div>
<div class="t" style="left:550.17px;top:336px;font-size:8.2px;color:#333;transform:scaleX(0.939)">0.09</div>
<div class="t" style="left:611.79px;top:336px;font-size:8.2px;color:#333;transform:scaleX(0.939)">2.61</div>
<div class="t" style="left:675.89px;top:336px;font-size:8.2px;color:#333;transform:scaleX(0.939)">1.01</div>
<div class="t" style="left:718.61px;top:336px;font-size:8.2px;color:#333;transform:scaleX(0.939)">99.98 %</div>
<div class="t" style="left:754.13px;top:336px;font-size:8.2px;color:#333;transform:scaleX(0.939)">2020-09-06 21:43:06</div>
<div class="a" style="left:828.2px;top:338.75px;width:8.7px;height:9.5px;background:#fff;border:1px solid #9d9d9d"></div>
<div class="a" style="left:123px;top:352.90px;width:718px;height:16.35px;background:#f3f3f3"></div>
<div class="t" style="left:122.98px;top:353px;font-size:8.2px;color:#4caf50;transform:scaleX(0.939)">vhost12</div>
<div class="t" style="left:207.72px;top:353px;font-size:8.2px;color:#333;transform:scaleX(0.939)">192.168.11.212</div>
<div class="t" style="left:278.76px;top:353px;font-size:8.2px;color:#333;transform:scaleX(0.939)">35</div>
<div class="t" style="left:320.14px;top:353px;font-size:8.2px;color:#4caf50;transform:scaleX(0.939)">12</div>
<div class="t" style="left:383.60px;top:353px;font-size:8.2px;color:#4caf50;transform:scaleX(0.939)">19</div>
<div class="t" style="left:405.64px;top:353px;font-size:8.2px;color:#b0d39e;transform:scaleX(0.939)">Up</div>
<div class="t" style="left:460.45px;top:353px;font-size:8.2px;color:#333;transform:scaleX(0.939)">120</div>
<div class="t" style="left:511.24px;top:353px;font-size:8.2px;color:#333;transform:scaleX(0.939)">4</div>
<div class="t" style="left:550.21px;top:353px;font-size:8.2px;color:#333;transform:scaleX(0.939)">0.32</div>
<div class="t" style="left:611.64px;top:353px;font-size:8.2px;color:#333;transform:scaleX(0.939)">1.14</div>
<div class="t" style="left:675.87px;top:353px;font-size:8.2px;color:#333;transform:scaleX(0.939)">1.09</div>
<div class="t" style="left:718.61px;top:353px;font-size:8.2px;color:#333;transform:scaleX(0.939)">99.99 %</div>
<div class="t" style="left:754.13px;top:353px;font-size:8.2px;color:#333;transform:scaleX(0.939)">2020-09-06 21:43:06</div>
<div class="a" style="left:828.2px;top:355.10px;width:8.7px;height:9.5px;background:#fff;border:1px solid #9d9d9d"></div>
<div class="t" style="left:122.98px;top:369px;font-size:8.2px;color:#4caf50;transform:scaleX(0.939)">vhost13</div>
<div class="t" style="left:207.72px;top:369px;font-size:8.2px;color:#333;transform:scaleX(0.939)">192.168.11.213</div>
<div class="t" style="left:278.66px;top:369px;font-size:8.2px;color:#333;transform:scaleX(0.939)">34</div>
<div class="t" style="left:320.14px;top:369px;font-size:8.2px;color:#4caf50;transform:scaleX(0.939)">12</div>
<div class="t" style="left:383.60px;top:369px;font-size:8.2px;color:#4caf50;transform:scaleX(0.939)">19</div>
<div class="t" style="left:405.64px;top:369px;font-size:8.2px;color:#b0d39e;transform:scaleX(0.939)">Up</div>
<div class="t" style="left:460.45px;top:369px;font-size:8.2px;color:#333;transform:scaleX(0.939)">120</div>
<div class="t" style="left:511.24px;top:369px;font-size:8.2px;color:#333;transform:scaleX(0.939)">4</div>
<div class="t" style="left:550.13px;top:369px;font-size:8.2px;color:#333;transform:scaleX(0.939)">0.25</div>
<div class="t" style="left:611.75px;top:369px;font-size:8.2px;color:#333;transform:scaleX(0.939)">2.63</div>
<div class="t" style="left:675.83px;top:369px;font-size:8.2px;color:#333;transform:scaleX(0.939)">1.05</div>
<div class="t" style="left:718.61px;top:369px;font-size:8.2px;color:#333;transform:scaleX(0.939)">99.98 %</div>
<div class="t" style="left:754.13px;top:369px;font-size:8.2px;color:#333;transform:scaleX(0.939)">2020-09-06 21:43:06</div>
<div class="a" style="left:828.2px;top:371.45px;width:8.7px;height:9.5px;background:#fff;border:1px solid #9d9d9d"></div>
<div class="a" style="left:123px;top:385.60px;width:718px;height:16.35px;background:#f3f3f3"></div>
<div class="t" style="left:122.98px;top:385px;font-size:8.2px;color:#4caf50;transform:scaleX(0.939)">vhost14</div>
<div class="t" style="left:207.72px;top:385px;font-size:8.2px;color:#333;transform:scaleX(0.939)">192.168.11.214</div>
<div class="t" style="left:278.78px;top:385px;font-size:8.2px;color:#333;transform:scaleX(0.939)">33</div>
<div class="t" style="left:320.14px;top:385px;font-size:8.2px;color:#4caf50;transform:scaleX(0.939)">12</div>
<div class="t" style="left:383.60px;top:385px;font-size:8.2px;color:#4caf50;transform:scaleX(0.939)">19</div>
<div class="t" style="left:405.64px;top:385px;font-size:8.2px;color:#b0d39e;transform:scaleX(0.939)">Up</div>
<div class="t" style="left:460.55px;top:385px;font-size:8.2px;color:#333;transform:scaleX(0.939)">267</div>
<div class="t" style="left:511.24px;top:385px;font-size:8.2px;color:#333;transform:scaleX(0.939)">4</div>
<div class="t" style="left:550.15px;top:385px;font-size:8.2px;color:#333;transform:scaleX(0.939)">0.26</div>
<div class="t" style="left:611.77px;top:385px;font-size:8.2px;color:#333;transform:scaleX(0.939)">3.99</div>
<div class="t" style="left:675.91px;top:385px;font-size:8.2px;color:#333;transform:scaleX(0.939)">1.02</div>
<div class="t" style="left:718.61px;top:385px;font-size:8.2px;color:#333;transform:scaleX(0.939)">98.93 %</div>
<div class="t" style="left:754.13px;top:385px;font-size:8.2px;color:#333;transform:scaleX(0.939)">2020-09-06 21:43:06</div>
<div class="a" style="left:828.2px;top:387.80px;width:8.7px;height:9.5px;background:#fff;border:1px solid #9d9d9d"></div>
<div class="t" style="left:122.98px;top:402px;font-size:8.2px;color:#4caf50;transform:scaleX(0.939)">vhost15</div>
<div class="t" style="left:207.72px;top:402px;font-size:8.2px;color:#333;transform:scaleX(0.939)">192.168.11.215</div>
<div class="t" style="left:278.84px;top:402px;font-size:8.2px;color:#333;transform:scaleX(0.939)">32</div>
<div class="t" style="left:320.14px;top:402px;font-size:8.2px;color:#4caf50;transform:scaleX(0.939)">12</div>
<div class="t" style="left:383.60px;top:402px;font-size:8.2px;color:#4caf50;transform:scaleX(0.939)">19</div>
<div class="t" style="left:405.64px;top:402px;font-size:8.2px;color:#b0d39e;transform:scaleX(0.939)">Up</div>
<div class="t" style="left:460.45px;top:402px;font-size:8.2px;color:#333;transform:scaleX(0.939)">120</div>
<div class="t" style="left:511.24px;top:402px;font-size:8.2px;color:#333;transform:scaleX(0.939)">4</div>
<div class="t" style="left:550.19px;top:402px;font-size:8.2px;color:#333;transform:scaleX(0.939)">0.31</div>
<div class="t" style="left:612.37px;top:402px;font-size:8.2px;color:#333;transform:scaleX(0.939)">1.11</div>
<div class="t" style="left:675.85px;top:402px;font-size:8.2px;color:#333;transform:scaleX(0.939)">0.93</div>
<div class="t" style="left:718.61px;top:402px;font-size:8.2px;color:#333;transform:scaleX(0.939)">99.99 %</div>
<div class="t" style="left:754.13px;top:402px;font-size:8.2px;color:#333;transform:scaleX(0.939)">2020-09-06 21:43:06</div>
<div class="a" style="left:828.2px;top:404.15px;width:8.7px;height:9.5px;background:#fff;border:1px solid #9d9d9d"></div>
<svg class="a" style="left:268.9px;top:74.5px" width="8.2" height="8.2" viewBox="0 0 8.2 8.2"><circle cx="3.4" cy="3.4" r="2.5" stroke="#111" stroke-width="1.6" fill="none"/><path d="M5.2 5.2L7.6 7.6" stroke="#111" stroke-width="2"/></svg>

</body></html>
